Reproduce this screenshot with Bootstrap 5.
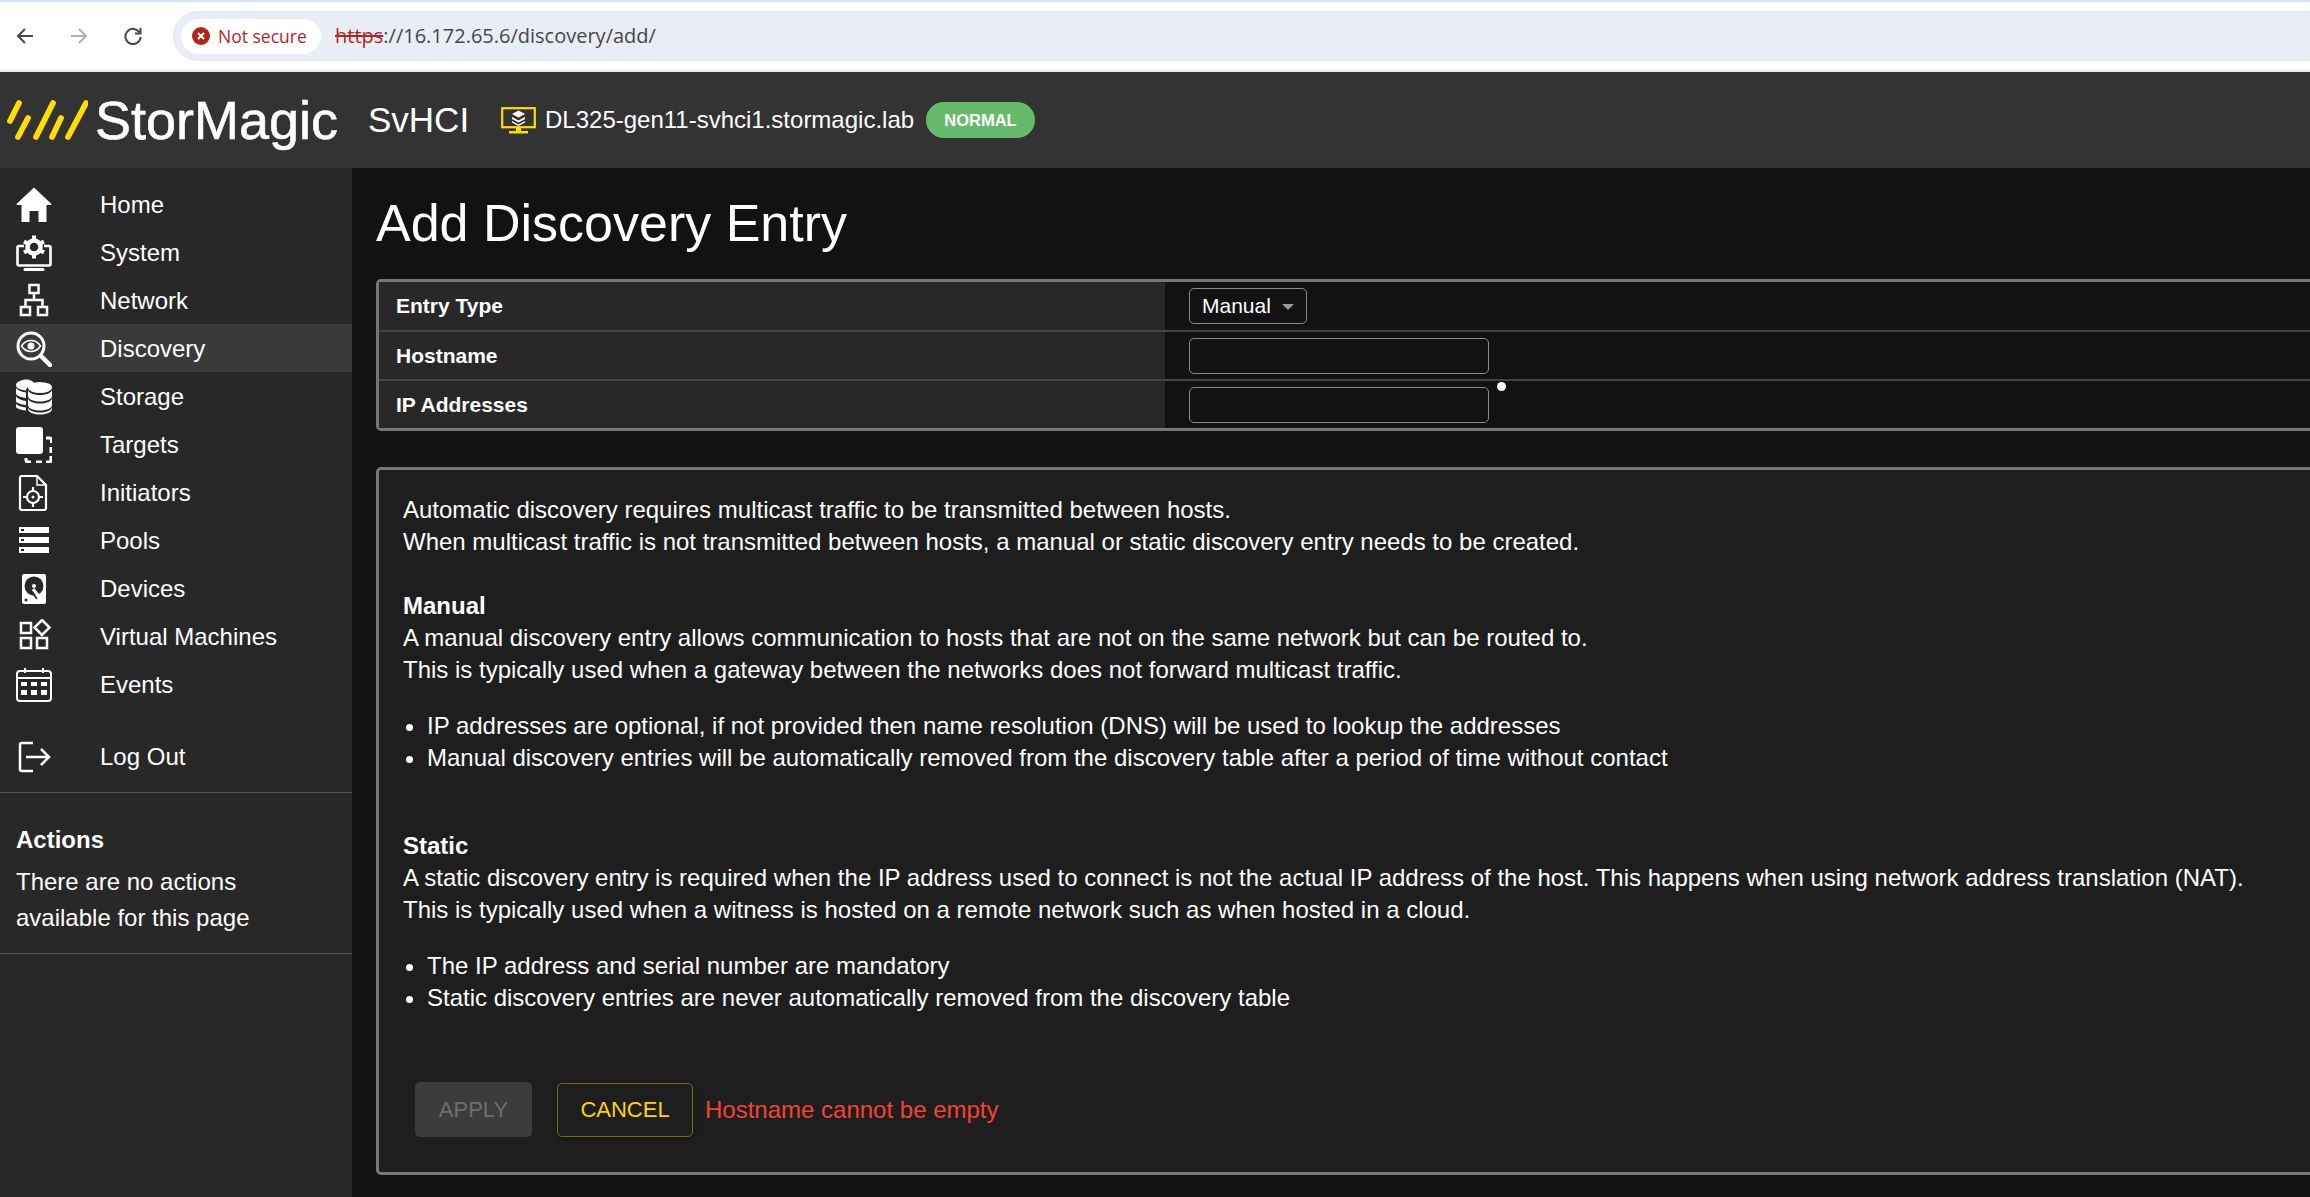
<!DOCTYPE html>
<html lang="en">
<head>
    <meta charset="UTF-8">
    <title>Add Discovery Entry</title>
    <link href="https://cdn.jsdelivr.net/npm/bootstrap@5.3.2/dist/css/bootstrap.min.css" rel="stylesheet">
    <style>
        html, body { height: 100%; }
        body {
            width: 2310px;
            height: 1197px;
            overflow: hidden;
            background: #121212;
            color: #fff;
            font-family: "Liberation Sans", Arial, sans-serif;
            font-size: 24px;
            line-height: 32px;
        }
        svg { display: block; flex: none; }

        /* browser bar */
        .chrome-bar {
            height: 72px;
            background: #fff;
            border-top: 2px solid #d3e3fd;
            border-bottom: 2px solid #e8e8e8;
            padding-left: 16px;
        }
        .chrome-btn { width: 18px; margin-right: 36px; }
        .chrome-btn.last { margin-right: 31px; }
        .addr-pill {
            height: 50px;
            margin-right: -40px;
            padding-left: 7px;
            background: #e9edf6;
            border: 1px solid #e6e8ee;
            border-radius: 25px;
        }
        .secure-chip {
            width: 140px;
            height: 35px;
            padding-left: 11px;
            background: #fff;
            border-radius: 18px;
            color: #b3261e;
            font-family: "Open Sans", "Noto Sans", sans-serif;
            font-size: 17.5px;
            line-height: 35px;
            gap: 8px;
        }
        .addr-text {
            margin-left: 14px;
            color: #474747;
            font-family: "Open Sans", "Noto Sans", sans-serif;
            font-size: 20px;
        }
        .addr-text s { color: #b3261e; }

        /* app header */
        .app-header {
            height: 96px;
            background: #333;
            padding-left: 7px;
        }
        .brand-name { font-size: 54px; margin-left: 7px; width: 273px; -webkit-text-stroke: .6px #fff; }
        .product-name { font-size: 35px; width: 133px; }
        .host-name { margin-left: 9px; width: 381px; white-space: nowrap; }
        .state-pill {
            width: 109px;
            height: 36px;
            background: #66bb6a;
            border-radius: 18px;
            font-size: 16.5px;
            font-weight: 700;
            line-height: 36px;
            text-align: center;
        }

        /* sidebar */
        .page-body { height: 1029px; }
        .side-bar {
            width: 352px;
            background: #282828;
            padding-top: 12px;
            flex: none;
        }
        .side-link {
            height: 48px;
            padding: 1px 0 0 16px;
            color: #fff;
            gap: 48px;
        }
        .side-link:hover, .side-link:focus { color: #fff; }
        .side-link.current { background: #3a3a3a; }
        .side-link svg { width: 36px; height: 36px; }
        .side-gap { height: 24px; }
        .side-actions {
            border-top: 1px solid #555;
            border-bottom: 1px solid #555;
            margin-top: 12px;
            padding: 31px 16px 17px;
            line-height: 36px;
        }
        .side-actions h6 { font-size: 24px; font-weight: 700; line-height: 32px; margin: 0 0 8px; }

        /* main */
        .main-pane { flex: 1; min-width: 0; padding: 0 0 0 24px; overflow: hidden; }
        .page-title { font-size: 52px; font-weight: 400; line-height: 70px; margin: 20px 0 21px; }
        .entry-table {
            width: 2000px;
            margin: 0;
            border-collapse: separate;
            border-spacing: 0;
            border: 3px solid #777;
            border-radius: 5px;
            font-size: 21px;
            line-height: 24px;
            table-layout: fixed;
        }
        .entry-table th, .entry-table td {
            height: 49px;
            padding: 0;
            border-bottom: 2px solid #444;
            vertical-align: middle;
            background: #121212;
            color: #fff;
        }
        .entry-table tr:first-child th, .entry-table tr:first-child td { height: 50px; }
        .entry-table tr:last-child th, .entry-table tr:last-child td { border-bottom: 0; height: 47px; }
        .entry-table th { width: 786px; padding-left: 17px; background: #282828; }
        .entry-table td { padding-left: 24px; position: relative; }
        .type-btn {
            width: 118px;
            height: 36px;
            padding: 0 0 0 12px;
            background: #121212;
            border: 1px solid #8a8a8a;
            border-radius: 5px;
            color: #fff;
            font-size: 21px;
            line-height: 32px;
            text-align: left;
        }
        .type-btn:hover, .type-btn:focus { background: #121212; color: #fff; border-color: #8a8a8a; }
        .type-btn::after { margin-left: 11px; color: #999; vertical-align: 3px; }
        .entry-input, .entry-input:focus {
            width: 300px;
            height: 36px;
            background: #121212;
            border: 1px solid #8a8a8a;
            border-radius: 5px;
            color: #fff;
            box-shadow: none;
        }
        .req-dot {
            position: absolute;
            left: 332px;
            top: 1px;
            width: 9px;
            height: 9px;
            background: #fff;
            border-radius: 50%;
        }
        .info-panel {
            width: 2000px;
            height: 708px;
            margin-top: 36px;
            padding: 24px 24px 0;
            background: #1e1e1e;
            border: 3px solid #777;
            border-radius: 5px;
        }
        .info-panel p { margin: 0; }
        .info-panel ul { margin: 24px 0 0; padding-left: 24px; }
        .info-panel .manual-block { margin-top: 32px; }
        .info-panel .static-block { margin-top: 56px; }
        .form-actions { margin: 68px 0 0 12px; }
        .apply-btn, .apply-btn:disabled {
            width: 117px;
            height: 55px;
            padding: 0;
            background: #3c3c3c;
            border: 0;
            border-radius: 5px;
            color: #6e6e6e;
            font-size: 22px;
            opacity: 1;
        }
        .cancel-btn {
            width: 136px;
            height: 54px;
            margin-left: 25px;
            padding: 0;
            background: transparent;
            border: 1px solid #7a6a14;
            border-radius: 5px;
            color: #ffd400;
            font-size: 22px;
            box-shadow: 0 2px 4px rgba(0, 0, 0, .35);
        }
        .cancel-btn:hover { color: #ffd400; border-color: #7a6a14; }
        .form-error { margin-left: 12px; color: #f44336; }
    </style>
</head>
<body>

<div class="chrome-bar d-flex align-items-center">
    <svg class="chrome-btn" viewBox="0 0 18 18" height="18" fill="none" stroke="#474747" stroke-width="2"><path d="M17 9H2M9 2 2 9l7 7"/></svg>
    <svg class="chrome-btn" viewBox="0 0 18 18" height="18" fill="none" stroke="#b0b0b0" stroke-width="2"><path d="M1 9h15M9 2l7 7-7 7"/></svg>
    <svg class="chrome-btn last" viewBox="0 0 18 18" height="18" fill="none" stroke="#474747" stroke-width="2"><path d="M15.500 5.500A7.600 7.600 0 1 0 16.600 10"/><path d="M16.500 1v5.500H11"/></svg>
    <div class="addr-pill flex-grow-1 d-flex align-items-center">
        <div class="secure-chip d-flex align-items-center">
            <svg width="18" height="18" viewBox="0 0 18 18"><circle cx="9" cy="9" r="9" fill="#b3261e"/><path d="M6 6l6 6M12 6l-6 6" stroke="#fff" stroke-width="2"/></svg>
            <span>Not secure</span>
        </div>
        <span class="addr-text"><s>https</s>://16.172.65.6/discovery/add/</span>
    </div>
</div>

<header class="app-header d-flex align-items-center">
    <svg width="81" height="42" viewBox="7 94 81 42" fill="none" stroke="#ffdd00" stroke-width="5.800" stroke-linecap="round">
        <path d="M19 98 10 116M28 113 18 132M53 98 36 132M61 113 52 132M86 98 68 132"/>
    </svg>
    <div class="brand-name">StorMagic</div>
    <div class="product-name">SvHCI</div>
    <svg width="35" height="27" viewBox="0 0 35 27">
        <rect x="1.200" y="1.200" width="32.600" height="19" fill="none" stroke="#ffdd00" stroke-width="2.200"/>
        <path d="M15 21h5v3h-5z" fill="#ffdd00"/><path d="M8 24h19v2.500H8z" fill="#ffdd00"/>
        <path d="M17.500 3.500 24 7l-6.500 3.500L11 7zM11 10l6.500 3.500L24 10v2l-6.500 3.500L11 12zM11 14l6.500 3.500L24 14v1.500L17.500 19 11 15.500z" fill="#fff"/>
    </svg>
    <div class="host-name">DL325-gen11-svhci1.stormagic.lab</div>
    <div class="state-pill">NORMAL</div>
</header>

<div class="page-body d-flex">
    <aside class="side-bar">
        <nav class="nav flex-column">
            <a class="nav-link side-link d-flex align-items-center" href="#">
                <svg viewBox="0 0 36 36" fill="#fff"><path d="M18 .5.5 17l.5 1h4.500v17h8V24h9v11h8V18H35l.5-1z"/></svg>
                Home</a>
            <a class="nav-link side-link d-flex align-items-center" href="#">
                <svg viewBox="0 0 36 36" fill="none" stroke="#fff" stroke-width="2.600"><path d="M8 11H3a1.500 1.500 0 0 0-1.500 1.500V29A1.500 1.500 0 0 0 3 30.500h30a1.500 1.500 0 0 0 1.500-1.500V12.500A1.500 1.500 0 0 0 33 11h-5"/><path d="M9 34.500h18" stroke-width="3" stroke-linecap="round"/><circle cx="18" cy="12" r="6.500" stroke-width="4.500"/><path d="M18 .5v5M18 18.500v5M8 6.500l4.500 2.500M23.500 15l4.500 2.500M8 17.500l4.500-2.500M23.500 9 28 6.500" stroke-width="4"/></svg>
                System</a>
            <a class="nav-link side-link d-flex align-items-center" href="#">
                <svg viewBox="0 0 36 36" fill="none" stroke="#fff" stroke-width="2.500"><rect x="13.500" y="2" width="9" height="8"/><rect x="5" y="24" width="9" height="8"/><rect x="22" y="24" width="9" height="8"/><path d="M18 10v7M9.500 24v-7h17v7"/></svg>
                Network</a>
            <a class="nav-link side-link current d-flex align-items-center" href="#">
                <svg viewBox="0 0 36 36" fill="none" stroke="#fff" stroke-width="3"><circle cx="15" cy="15" r="13"/><path d="M25 25l9 9" stroke-width="4.500" stroke-linecap="round"/><path d="M5.500 15C8 11 11 9.500 15 9.500S22 11 24.500 15C22 19 19 20.500 15 20.500S8 19 5.500 15z" stroke-width="1.500"/><circle cx="15" cy="15" r="3.500" fill="#fff" stroke="none"/></svg>
                Discovery</a>
            <a class="nav-link side-link d-flex align-items-center" href="#">
                <svg viewBox="0 0 36 36" fill="#fff">
                    <path d="M11 .5C5 .5 0 3 0 6s4 5 10 5.500c.5-3.500 4-5.500 9-6.500C17 2 14 .5 11 .5zM0 9c2 2.500 6 4 10 4.500v5.500C5 18.500 0 16.500 0 14.500zM0 17.500c2 2.500 6 4 10 4.500v4C5 25.500 0 24 0 22zM0 25c2 2 6 3 10 3.500v3C5 31 0 29.500 0 27.500z"/>
                    <ellipse cx="24" cy="8.500" rx="12" ry="5.500"/>
                    <path d="M12 10.500c0 3 5 5.500 12 5.500s12-2.500 12-5.500V17c0 3-5 5.500-12 5.500S12 20 12 17zM12 19c0 3 5 5.500 12 5.500S36 22 36 19v7c0 3-5 5.500-12 5.500S12 29 12 26zM12 28c0 3 5 5.500 12 5.500S36 31 36 28v2c0 3-5 5.500-12 5.500S12 33 12 30z"/>
                </svg>
                Storage</a>
            <a class="nav-link side-link d-flex align-items-center" href="#">
                <svg viewBox="0 0 36 36"><rect x="0" y="0" width="27" height="27" rx="3" fill="#fff"/><path d="M30 11h3.500a2 2 0 0 1 2 2v3M35 20v6M35 29v4a2 2 0 0 1-2 2h-3M26 35h-6M15 35h-3a2 2 0 0 1-2-2v-2" fill="none" stroke="#fff" stroke-width="3"/></svg>
                Targets</a>
            <a class="nav-link side-link d-flex align-items-center" href="#">
                <svg viewBox="0 0 36 36" fill="none" stroke="#fff" stroke-width="2.200"><path d="M6 1h15l9 9v23a2 2 0 0 1-2 2H6a2 2 0 0 1-2-2V3a2 2 0 0 1 2-2z"/><path d="M21 1v9h9" stroke-width="1.500"/><circle cx="17" cy="22" r="6"/><circle cx="17" cy="22" r="1.500" fill="#fff" stroke="none"/><path d="M17 12v5M17 27v5M7 22h5M22 22h5"/></svg>
                Initiators</a>
            <a class="nav-link side-link d-flex align-items-center" href="#">
                <svg viewBox="0 0 36 36" fill="#fff" fill-rule="evenodd"><path d="M3 4h30v6H3zM5 6v2h3V6zM3 14h30v6H3zM5 16v2h3v-2zM3 24h30v6H3zM5 26v2h3v-2z"/></svg>
                Pools</a>
            <a class="nav-link side-link d-flex align-items-center" href="#">
                <svg viewBox="0 0 36 36"><rect x="6" y="3" width="24" height="30" rx="2" fill="#fff"/><circle cx="18" cy="15" r="9.500" fill="#282828"/><circle cx="18" cy="15" r="2" fill="#fff"/><path d="M17 18l7 9" stroke="#fff" stroke-width="3"/><path d="M15 20l6 8" stroke="#282828" stroke-width="1.500"/><circle cx="10" cy="29" r="1.500" fill="#282828"/></svg>
                Devices</a>
            <a class="nav-link side-link d-flex align-items-center" href="#">
                <svg viewBox="0 0 36 36" fill="none" stroke="#fff" stroke-width="2.500"><rect x="5" y="4" width="10" height="10"/><rect x="5" y="19" width="10" height="10"/><rect x="21" y="19" width="10" height="10"/><path d="M26 1l7.500 7.500L26 16l-7.500-7.500z"/></svg>
                Virtual Machines</a>
            <a class="nav-link side-link d-flex align-items-center" href="#">
                <svg viewBox="0 0 36 36" fill="none" stroke="#fff" stroke-width="2"><rect x="1" y="4" width="34" height="30" rx="3"/><path d="M9 1v5M27 1v5M1 11h34"/><g fill="#fff" stroke="none"><path d="M5 15h6v4H5zM15 15h6v4h-6zM25 15h6v4h-6zM5 23h6v5H5zM15 23h6v5h-6zM25 23h6v5h-6z"/></g></svg>
                Events</a>
            <div class="side-gap"></div>
            <a class="nav-link side-link d-flex align-items-center" href="#">
                <svg viewBox="0 0 36 36" fill="none" stroke="#fff" stroke-width="2.500"><path d="M17 4H6a2 2 0 0 0-2 2v24a2 2 0 0 0 2 2h11"/><path d="M10 18h22M25 10l8 8-8 8"/></svg>
                Log Out</a>
        </nav>
        <div class="side-actions">
            <h6>Actions</h6>
            There are no actions<br>available for this page
        </div>
    </aside>

    <main class="main-pane">
        <h1 class="page-title">Add Discovery Entry</h1>
        <table class="entry-table">
            <tr>
                <th>Entry Type</th>
                <td><button class="btn dropdown-toggle type-btn" type="button" data-bs-toggle="dropdown">Manual</button></td>
            </tr>
            <tr>
                <th>Hostname</th>
                <td><input class="form-control entry-input" type="text" aria-label="Hostname"></td>
            </tr>
            <tr>
                <th>IP Addresses</th>
                <td><input class="form-control entry-input" type="text" aria-label="IP Addresses"><span class="req-dot"></span></td>
            </tr>
        </table>

        <section class="info-panel">
            <p>Automatic discovery requires multicast traffic to be transmitted between hosts.<br>
                When multicast traffic is not transmitted between hosts, a manual or static discovery entry needs to be created.</p>
            <p class="manual-block"><b>Manual</b><br>
                A manual discovery entry allows communication to hosts that are not on the same network but can be routed to.<br>
                This is typically used when a gateway between the networks does not forward multicast traffic.</p>
            <ul>
                <li>IP addresses are optional, if not provided then name resolution (DNS) will be used to lookup the addresses</li>
                <li>Manual discovery entries will be automatically removed from the discovery table after a period of time without contact</li>
            </ul>
            <p class="static-block"><b>Static</b><br>
                A static discovery entry is required when the IP address used to connect is not the actual IP address of the host. This happens when using network address translation (NAT).<br>
                This is typically used when a witness is hosted on a remote network such as when hosted in a cloud.</p>
            <ul>
                <li>The IP address and serial number are mandatory</li>
                <li>Static discovery entries are never automatically removed from the discovery table</li>
            </ul>
            <div class="form-actions d-flex align-items-center">
                <button class="btn apply-btn" type="button" disabled>APPLY</button>
                <button class="btn cancel-btn" type="button">CANCEL</button>
                <span class="form-error">Hostname cannot be empty</span>
            </div>
        </section>
    </main>
</div>

<script src="https://cdn.jsdelivr.net/npm/bootstrap@5.3.2/dist/js/bootstrap.bundle.min.js"></script>
</body>
</html>
